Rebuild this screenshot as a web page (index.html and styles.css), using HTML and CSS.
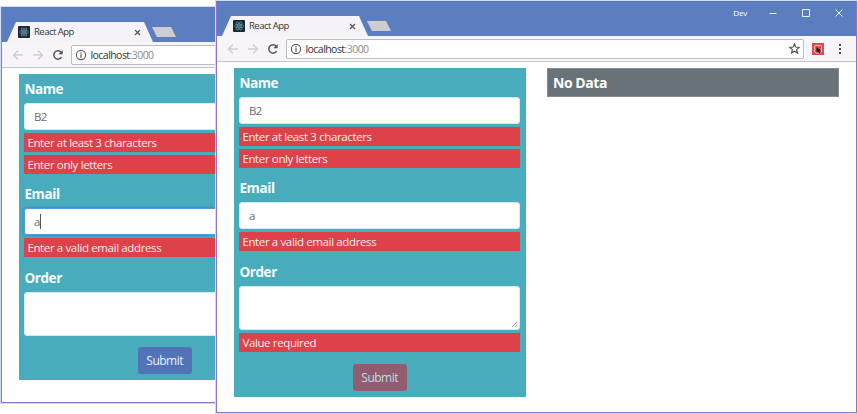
FILE: index.html
```html
<!DOCTYPE html>
<html lang="en">
<head>
<meta charset="utf-8">
<title>React App</title>
<link rel="stylesheet" href="styles.css">
</head>
<body>
<svg width="0" height="0" class="defs">
  <symbol id="favicon" viewBox="0 0 12 12"><rect width="12" height="12" rx="1" fill="#20262d"/><g fill="none" stroke="#5b9fb3" stroke-width=".7"><ellipse cx="6" cy="6" rx="4.6" ry="1.8"/><ellipse cx="6" cy="6" rx="4.6" ry="1.8" transform="rotate(60 6 6)"/><ellipse cx="6" cy="6" rx="4.6" ry="1.8" transform="rotate(120 6 6)"/></g><circle cx="6" cy="6" r=".9" fill="#5b9fb3"/></symbol>
  <symbol id="arrow" viewBox="0 0 12 12"><path d="M11 6H1.5M6 1.5 1.5 6 6 10.5" fill="none" stroke="#cfcdd0" stroke-width="1.3"/></symbol>
  <symbol id="reload" viewBox="0 0 12 12"><path d="M9.6 8.1A4.2 4.2 0 1 1 9.2 3.2" fill="none" stroke="#55555a" stroke-width="1.5"/><path d="M10.7 1v4.3H6.4z" fill="#55555a"/></symbol>
  <symbol id="info" viewBox="0 0 12 12"><circle cx="6" cy="6" r="4.6" fill="none" stroke="#5a5a5e" stroke-width="1.1"/><path d="M6 5.3v3.4M6 3.2v1.2" stroke="#5a5a5e" stroke-width="1.3"/></symbol>
</svg>

<section class="window back">
  <div class="titlebar">
    <div class="tab"><svg class="fav"><use href="#favicon"/></svg><span class="title">React App</span><svg class="x" viewBox="0 0 7 7"><path d="M1 1l5 5M6 1 1 6"/></svg></div>
    <div class="newtab"></div>
  </div>
  <div class="toolbar">
    <svg class="ico"><use href="#arrow"/></svg><svg class="ico flip"><use href="#arrow"/></svg><svg class="ico reload"><use href="#reload"/></svg>
    <div class="address"><svg class="ico"><use href="#info"/></svg><span class="url">localhost<i>:3000</i></span></div>
  </div>
  <div class="page">
    <form class="form">
      <div class="group"><label>Name</label><div class="input">B2</div><div class="error">Enter at least 3 characters</div><div class="error">Enter only letters</div></div>
      <div class="group"><label>Email</label><div class="input focus">a<span class="caret"></span></div><div class="error">Enter a valid email address</div></div>
      <div class="group"><label>Order</label><div class="input area"></div></div>
      <div class="actions"><span class="btn">Submit</span></div>
    </form>
  </div>
</section>

<section class="window front">
  <div class="titlebar">
    <div class="tab"><svg class="fav"><use href="#favicon"/></svg><span class="title">React App</span><svg class="x" viewBox="0 0 7 7"><path d="M1 1l5 5M6 1 1 6"/></svg></div>
    <div class="newtab"></div>
    <div class="controls"><span>Dev</span>
      <svg width="8" height="8" viewBox="0 0 8 8"><path d="M.5 4.5h7"/></svg>
      <svg width="8" height="8" viewBox="0 0 8 8"><path d="M.5.5h7v7h-7z"/></svg>
      <svg width="8" height="8" viewBox="0 0 8 8"><path d="M.5.5l7 7M7.500.5l-7 7"/></svg>
    </div>
  </div>
  <div class="toolbar">
    <svg class="ico"><use href="#arrow"/></svg><svg class="ico flip"><use href="#arrow"/></svg><svg class="ico reload"><use href="#reload"/></svg>
    <div class="address"><svg class="ico"><use href="#info"/></svg><span class="url">localhost<i>:3000</i></span>
      <svg class="star" viewBox="0 0 11 11"><path d="M5.500 1l1.300 3.100 3.500.3-2.700 2.200.9 3.400-3-1.800-3 1.800.9-3.400L.7 4.400l3.500-.3z"/></svg>
    </div>
    <svg class="ext" viewBox="0 0 12 12"><path fill="#dc4c4e" d="M0 0h12v12H0z"/><path d="M2 4l2-2 2 1 2-1 2 2-1 2 1 2-2 2H4L2 8l1-2z" fill="none" stroke="#f3c6c6" stroke-width="1"/><path d="M4.500 4l4.500 3.500-1.500.5 1 2-1.500.5-1-2-1.500 1z" fill="#2b1719"/></svg>
    <svg class="more" viewBox="0 0 4 12"><path d="M1 1h2v2H1zM1 5h2v2H1zM1 9h2v2H1z" fill="#4c4c50"/></svg>
  </div>
  <div class="page">
    <form class="form">
      <div class="group"><label>Name</label><div class="input">B2</div><div class="error">Enter at least 3 characters</div><div class="error">Enter only letters</div></div>
      <div class="group"><label>Email</label><div class="input">a</div><div class="error">Enter a valid email address</div></div>
      <div class="group"><label>Order</label><div class="input area"><svg class="grip" viewBox="0 0 8 8"><path d="M1 7l6-6M4.500 7 7 4.500"/></svg></div><div class="error">Value required</div></div>
      <div class="actions"><span class="btn invalid">Submit</span></div>
    </form>
    <div class="nodata">No Data</div>
  </div>
</section>
</body>
</html>
```
FILE: styles.css
```css
* { box-sizing: border-box; }
body { margin: 0; height: 414px; overflow: hidden; position: relative; background: #fff; font-family: "Open Sans", "Noto Sans", sans-serif; }
svg { display: block; flex: none; }
.defs { position: absolute; }
.window { position: absolute; width: 641px; background: #fff; border: 1px solid #9272cb; border-top-color: #5a7cbd; box-shadow: 0 0 0 1px #cfdcf0; }
.back { left: 1px; top: 7px; height: 396px; }
.front { left: 216px; top: 1px; height: 412px; }

.titlebar { height: 34px; background: #5a7ebf; display: flex; align-items: flex-end; padding-left: 5px; }
.tab { width: 146px; height: 20px; background: #f5f3f7; clip-path: polygon(9px 0, 137px 0, 146px 100%, 0 100%); display: flex; align-items: center; padding: 0 12px 0 11px; }
.fav { width: 12px; height: 12px; }
.title { flex: 1; margin-left: 4px; font: 9.500px/14px "Open Sans", sans-serif; letter-spacing: -.52px; color: #333; }
.x { width: 7px; height: 7px; margin-left: -8px; }
.x path { stroke: #555; stroke-width: 1.2; }
.newtab { width: 24px; height: 10px; margin: 0 0 5px -1px; background: #cdcdd0; clip-path: polygon(0 0, 19px 0, 100% 100%, 5px 100%); }
.controls { margin-left: auto; align-self: flex-start; height: 21px; display: flex; align-items: center; padding-right: 13px; }
.controls span { font-size: 8px; color: #fff; margin-right: 22px; letter-spacing: -.2px; }
.controls svg { margin-left: 25px; fill: none; stroke: #e8f0fb; stroke-width: 1; }
.controls span + svg { margin-left: 0; }

.toolbar { height: 26px; background: #f7f5f8; border-bottom: 1px solid #c4c4c8; display: flex; align-items: center; padding-left: 10px; }
.ico { width: 12px; height: 12px; }
.flip { transform: scaleX(-1); margin-left: 8px; }
.reload { margin-left: 8px; }
.address { width: 518px; height: 20px; margin-left: 7px; border: 1px solid #bdbdc1; border-radius: 2px; background: #fff; display: flex; align-items: center; padding: 0 3px 0 3px; }
.url { flex: 1; margin-left: 3.500px; font-size: 10.500px; letter-spacing: -.55px; line-height: 16px; color: #333; }
.url i { font-style: normal; color: #8c8c90; }
.star { width: 11px; height: 11px; fill: none; stroke: #4c4c50; stroke-width: 1.1; }
.ext { width: 12px; height: 12px; margin-left: 8px; }
.more { width: 4px; height: 12px; margin-left: 14px; }

.page { display: flex; align-items: flex-start; padding: 6px 17px 0 17px; }
.form { width: 292px; flex: none; background: #49acbc; padding: 5px 6px 6px 5.400px; margin: 0; }
.group { margin-bottom: 10.300px; }
label { display: block; height: 24px; line-height: 21px; font-size: 13.500px; font-weight: 700; letter-spacing: -.4px; color: #f7fcfd; }
.input { height: 26.500px; background: #fff; border: 1px solid #d7e8ee; border-radius: 3px; padding-left: 8.500px; font-size: 11.500px; letter-spacing: -.5px; line-height: 25px; color: #666c72; display: flex; align-items: center; }
.focus { border-color: #4f9ce0; box-shadow: 0 0 2px 1px #3d8fcb; }
.caret { width: 1px; height: 15px; background: #555; }
.area { height: 44px; align-items: flex-end; justify-content: flex-end; padding: 0 1px 1px 0; }
.grip { width: 7px; height: 7px; fill: none; stroke: #888; stroke-width: 1; }
.error { height: 19.500px; margin-top: 3px; padding-left: 3px; background: #dd424b; color: #fcebec; font-size: 11.500px; letter-spacing: -.37px; line-height: 20px; }
.error + .error { margin-top: 2.500px; }
.actions { display: flex; justify-content: center; padding-top: 1.500px; }
.btn { width: 54px; height: 27px; border-radius: 3px; background: #5273b8; color: #e8f2fb; font-size: 12px; letter-spacing: -.5px; line-height: 28px; text-align: center; }
.invalid { background: #935c6e; color: #b9dce5; }
.nodata { flex: 1; height: 29px; margin-left: 21px; padding-left: 5px; background: #697179; border: 1px solid #848c94; color: #fff; font-weight: 700; font-size: 14px; letter-spacing: -.45px; line-height: 27px; }
```
